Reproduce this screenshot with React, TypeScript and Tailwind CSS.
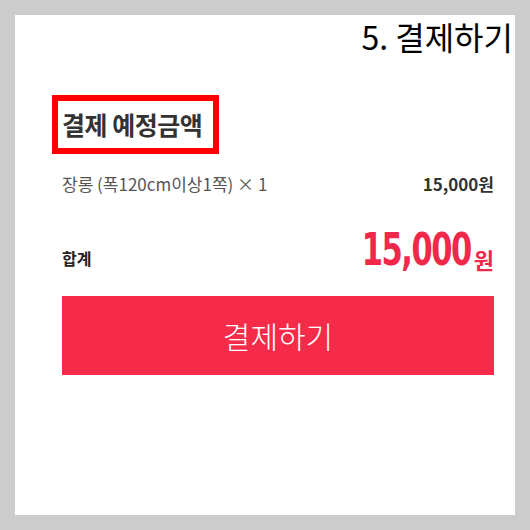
export default function App() {
  return (
    <div className="w-[530px] h-[530px] bg-[#cccccc] p-[15px] font-['Noto_Sans_CJK_KR',sans-serif]">
      <div className="bg-white w-full h-full">
        {/* Step title */}
        <div className="flex justify-end pr-[2px] pt-[1px]">
          <h1 className="text-[32px] leading-[40px] text-black">5. 결제하기</h1>
        </div>

        <div className="pl-[37px] pr-[21px] mt-[39px]">
          {/* Heading with annotation box */}
          <div className="w-[167px] border-[6px] border-[#ff0000] px-[4px] h-[59px]">
            <h2 className="text-[25px] leading-[47px] font-bold text-[#333] tracking-[-0.5px] whitespace-nowrap">결제 예정금액</h2>
          </div>

          <div className="pl-[10px]">
            {/* Item line */}
            <div className="flex justify-between items-center mt-[20px] h-[20px]">
              <span className="text-[17px] text-[#555]">장롱 (폭120cm이상1쪽) × 1</span>
              <span className="text-[17px] font-bold text-[#333]">15,000원</span>
            </div>

            {/* Total */}
            <div className="flex justify-between items-end mt-[38px] h-[40px]">
              <span className="text-[16px] font-bold text-[#222] mb-[2px]">합계</span>
              <span className="flex items-end text-[#f0284a] font-bold">
                <span className="font-['DejaVu_Sans_Condensed',sans-serif] text-[34px] leading-[34px] inline-block scale-y-[1.33] origin-bottom tracking-[-1.5px]">15,000</span>
                <span className="text-[22px] leading-[26px] ml-[3px]">원</span>
              </span>
            </div>

            {/* Pay button */}
            <button className="mt-[24px] w-full h-[79px] bg-[#f52b49] text-white text-[30px] font-light">결제하기</button>
          </div>
        </div>
      </div>
    </div>
  )
}
